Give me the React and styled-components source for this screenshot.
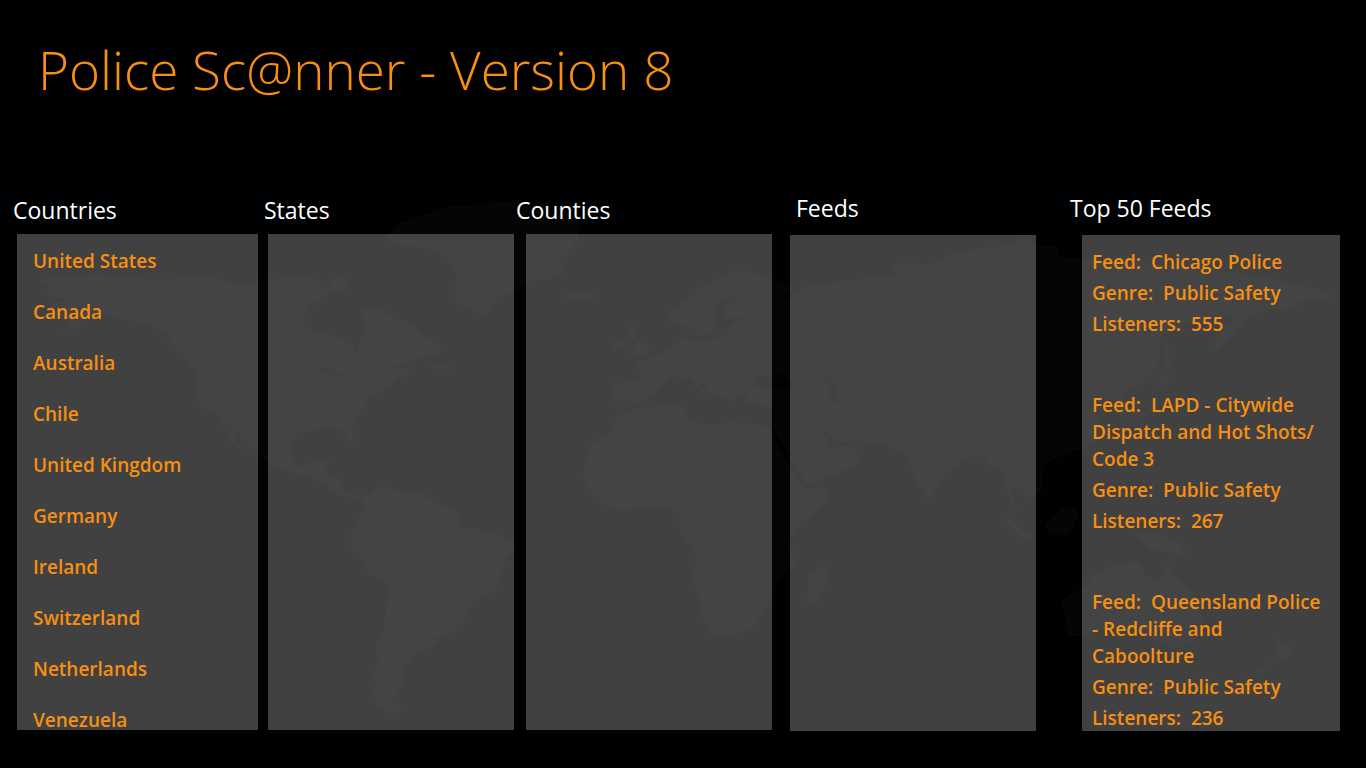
import React from 'react'
import styled, { createGlobalStyle } from 'styled-components'

const countries = [
    'United States',
    'Canada',
    'Australia',
    'Chile',
    'United Kingdom',
    'Germany',
    'Ireland',
    'Switzerland',
    'Netherlands',
    'Venezuela',
]

const topFeeds = [
    { name: 'Chicago Police', genre: 'Public Safety', listeners: 555 },
    { name: 'LAPD - Citywide Dispatch and Hot Shots/ Code 3', genre: 'Public Safety', listeners: 267 },
    { name: 'Queensland Police - Redcliffe and Caboolture', genre: 'Public Safety', listeners: 236 },
]

function WorldMap() {
    return (
        <Map viewBox="0 0 1366 768" preserveAspectRatio="xMidYMid slice" aria-hidden="true">
            <g fill="#050506" stroke="#000000" strokeWidth="2" strokeLinejoin="round">
                {/* the Americas */}
                <path d="M40 281L45 276 100 273 158 279 200 274 250 286 258 278 300 277 310 275 325 288 336 276 350 280 350 288 325 297 310 308 303 323 320 332 345 338 356 352 360 340 364 330 360 318 362 308 380 307 394 317 412 322 425 335 442 345 440 355 415 360 395 366 415 370 400 378 385 390 370 398 358 420 353 430 355 445 348 440 340 430 325 430 300 433 290 448 297 465 310 463 320 458 331 457 326 474 340 476 345 490 365 496 375 488 388 485 395 489 420 491 437 503 455 508 462 520 460 527 475 527 500 535 515 540 519 548 505 562 500 585 490 595 472 603 467 620 450 635 436 638 440 643 415 655 402 675 404 685 392 702 402 706 403 712 390 716 375 706 373 695 375 680 370 675 377 660 375 645 383 632 387 583 370 575 350 545 350 528 363 512 362 500 340 496 331 492 325 484 300 476 270 466 255 454 238 434 229 426 246 452 232 446 220 420 200 405 195 392 194 370 180 355 165 335 150 325 120 320 100 317 85 320 70 335 55 338 70 325 50 312 48 305 65 300 42 296 52 288Z" />
                <path d="M429 364L440 360 453 366 450 371 434 369Z" />
                {/* Greenland and Iceland */}
                <path d="M385 235L400 222 425 213 450 205 480 203 520 200 560 205 582 225 578 240 572 248 560 262 565 272 550 280 530 282 515 293 500 297 485 318 470 312 455 300 453 285 456 275 448 262 435 250 415 248 392 245Z" />
                <path d="M562 295L578 292 596 292 594 299 578 303 567 301Z" />
                {/* British Isles */}
                <path d="M626 326L632 322 640 330 636 338 653 350 645 356 628 355 634 345Z" />
                <path d="M612 340L622 338 625 345 612 353 609 347Z" />
                {/* Europe and Asia */}
                <path d="M668 325L668 312 685 300 700 288 720 275 740 269 765 275 790 285 797 290 785 297 800 290 810 283 830 282 860 278 885 274 897 278 890 270 900 261 925 264 945 256 960 250 1015 243 1025 236 1035 243 1058 245 1060 256 1085 258 1150 262 1220 270 1260 275 1300 285 1335 292 1330 299 1300 303 1290 312 1270 310 1248 318 1235 335 1217 353 1213 345 1218 330 1235 318 1220 318 1190 325 1160 337 1160 365 1145 382 1125 395 1128 412 1120 420 1112 400 1095 400 1090 405 1105 425 1095 445 1060 458 1045 465 1044 490 1030 500 1020 488 1010 490 1022 515 1015 510 1005 490 1003 473 988 468 985 458 975 455 965 462 940 480 936 492 929 500 915 482 908 458 890 447 868 445 850 440 840 445 825 432 832 448 845 443 863 456 855 466 830 478 807 485 795 468 772 428 772 408 745 405 745 395 732 402 710 395 698 378 708 394 702 396 690 380 672 377 660 390 640 403 612 402 612 382 640 380 640 375 632 362 655 356 678 343 680 324Z" />
                {/* Africa */}
                <path d="M620 412L640 406 683 404 690 418 712 425 730 420 768 425 788 462 806 488 833 488 825 505 805 522 791 538 796 565 780 580 773 595 765 610 755 628 735 637 710 638 700 615 695 590 688 578 695 560 690 548 680 535 677 512 655 507 620 512 605 508 585 485 582 475 588 447 608 432Z" />
                <path d="M808 575L825 563 828 580 820 603 806 605Z" />
                {/* Oceania */}
                <path d="M995 508L1010 518 1033 536 1028 543 1010 528Z" />
                <path d="M1043 525L1060 508 1075 505 1080 515 1070 535 1050 537Z" />
                <path d="M1130 530L1160 533 1178 542 1192 558 1165 552 1150 550Z" />
                <path d="M1060 600L1085 585 1095 572 1115 565 1130 560 1142 562 1145 575 1158 580 1167 560 1175 575 1195 595 1204 620 1195 645 1170 650 1145 635 1110 628 1085 637 1068 637Z" />
                <path d="M1274 636L1295 650 1285 661 1277 655Z" />
                <path d="M1278 658L1270 668 1255 678 1258 668Z" />
                {/* Japan */}
                <path d="M1163 338L1170 350 1171 370 1163 368Z" />
                <path d="M1157 380L1165 374 1175 380 1158 388Z" />
                <path d="M1158 392L1160 402 1148 416 1128 420 1150 406Z" />
            </g>
            {/* Baltic, Black and Caspian seas, Great Lakes */}
            <g fill="#000102">
                <path d="M738 295L724 308 725 318 752 318 734 323 722 337 700 341 684 340 679 326 688 326 700 336 712 333 716 322 714 310 724 299Z" />
                <path d="M751 386L757 376 768 374 776 378 782 372 786 379 796 388 775 388Z" />
                <path d="M824 377L836 371 831 380 841 402 828 403 831 390Z" />
                <path d="M317 369L328 367 349 378 330 372Z" />
            </g>
        </Map>
    )
}

export default function App() {
    return (
        <Page>
            <GlobalStyle />
            <WorldMap />
            <Header>
                <Title>Police Sc@nner - Version 8</Title>
            </Header>
            <Board>
                <Column>
                    <Heading>Countries</Heading>
                    <Panel $left={4} $right={6}>
                        <CountryList>
                            {countries.map((country) => (
                                <li key={country}>
                                    <Country type="button">{country}</Country>
                                </li>
                            ))}
                        </CountryList>
                    </Panel>
                </Column>
                <Column>
                    <Heading>States</Heading>
                    <Panel $left={4} $right={2} />
                </Column>
                <Column>
                    <Heading>Counties</Heading>
                    <Panel $left={10} $right={18} />
                </Column>
                <Column $raised>
                    <Heading $indent={6}>Feeds</Heading>
                    <Panel $right={34} />
                </Column>
                <Column $raised>
                    <Heading>Top 50 Feeds</Heading>
                    <Panel $left={12}>
                        <FeedList>
                            {topFeeds.map((feed) => (
                                <Feed key={feed.name}>
                                    <p>{`Feed:  ${feed.name}`}</p>
                                    <p>{`Genre:  ${feed.genre}`}</p>
                                    <p>{`Listeners:  ${feed.listeners}`}</p>
                                </Feed>
                            ))}
                        </FeedList>
                    </Panel>
                </Column>
            </Board>
        </Page>
    )
}

const GlobalStyle = createGlobalStyle`
    * {
        box-sizing: border-box;
        margin: 0;
        padding: 0;
    }
    body {
        background: #000;
        font-family: "Open Sans", "Noto Sans", sans-serif;
    }
    ul {
        list-style: none;
    }
`;

const Page = styled.main`
    position: relative;
    display: flex;
    flex-direction: column;
    height: 100vh;
    overflow: hidden;
    background: #000102;
`;

const Map = styled.svg`
    position: absolute;
    inset: 0;
    width: 100%;
    height: 100%;
`;

const Header = styled.header`
    position: relative;
    padding: 30px 38px 40px;
    background: #000;
`;

const Title = styled.h1`
    color: #f78f12;
    font-size: 53px;
    font-weight: 300;
    line-height: 80px;
`;

const Board = styled.div`
    position: relative;
    display: grid;
    grid-template-columns: 251fr 252fr 274fr 280fr 270fr;
    flex: 1;
    min-height: 0;
    padding: 44px 26px 38px 13px;
`;

const Column = styled.section`
    display: flex;
    flex-direction: column;
    min-width: 0;
    min-height: 0;
    margin: ${({ $raised }) => ($raised ? '-2px 0 -1px' : '0')};
    row-gap: ${({ $raised }) => ($raised ? '11px' : '8px')};
`;

const Heading = styled.h2`
    padding-left: ${({ $indent = 0 }) => $indent}px;
    color: #fff;
    font-size: 23px;
    font-weight: 400;
    line-height: 32px;
`;

const Panel = styled.div`
    flex: 1;
    min-height: 0;
    margin: 0 ${({ $right = 0 }) => $right}px 0 ${({ $left = 0 }) => $left}px;
    overflow: hidden;
    background: rgba(255, 255, 250, 0.255);
`;

const CountryList = styled.ul`
    padding: 2px 16px;
`;

const Country = styled.button`
    display: block;
    width: 100%;
    border: 0;
    background: none;
    color: #f78f12;
    font-family: inherit;
    font-size: 19px;
    font-weight: 600;
    line-height: 51px;
    text-align: left;
    cursor: pointer;
`;

const FeedList = styled.ul`
    display: flex;
    flex-direction: column;
    gap: 54px;
    padding: 14px 16px 14px 10px;
`;

const Feed = styled.li`
    display: flex;
    flex-direction: column;
    gap: 4px;
    color: #f78f12;
    font-size: 19px;
    font-weight: 600;
    line-height: 27px;
    white-space: pre-wrap;
`;
